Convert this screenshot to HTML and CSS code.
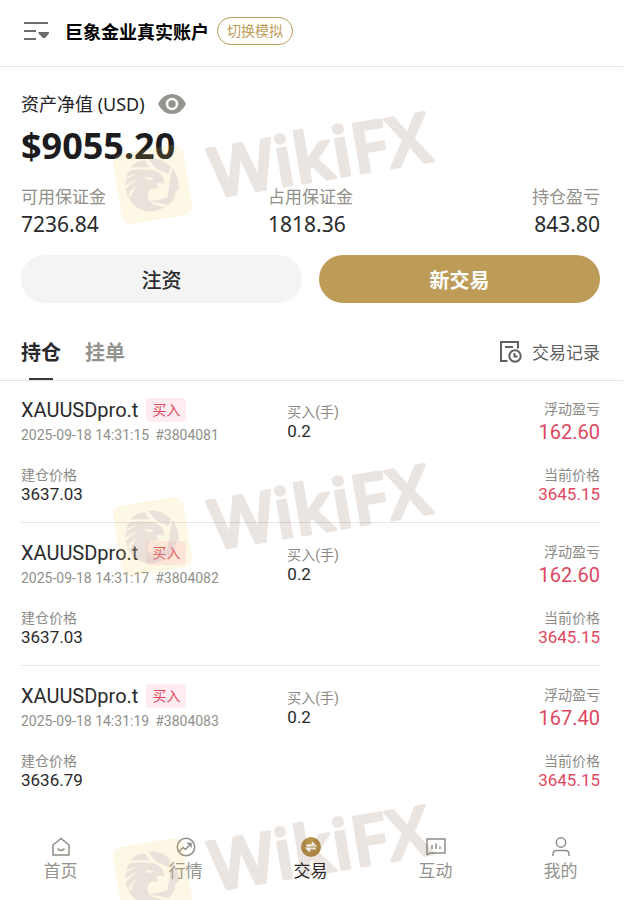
FILE: index.html
```html
<!DOCTYPE html>
<html lang="zh-CN">
<head>
<meta charset="utf-8">
<meta name="viewport" content="width=device-width, initial-scale=1">
<title>交易</title>
<link rel="stylesheet" href="styles.css">
</head>
<body>
<svg class="defs" aria-hidden="true">
  <symbol id="brand" viewBox="108 76 352 164" overflow="visible">
    <rect class="brand-tile" x="117" y="149" width="71" height="71" rx="9" transform="rotate(-9.6 152.5 184.5)"/>
    <g class="brand-mark" transform="translate(108 138) scale(.33333)">
      <path d="M66 88 Q80 73 103 67 Q111 66 116 74 L124 88 Q94 87 66 88Z"/>
      <path d="M119 62 Q160 57 188 86 L181 108 L145 92 Q132 79 119 62Z"/>
      <path d="M194 91 Q214 116 212 149 L184 188 L178 178 L189 108Z"/>
      <path d="M205 169 Q197 188 181 201 L122 189 Q154 187 179 178Z"/>
      <path d="M170 208 Q132 230 94 213 Q67 199 56 165 Q49 137 57 111 Q61 101 66 97 Q98 91 126 95 Q151 99 161 112 Q168 121 169 139 Q159 132 145 136 Q144 142 153 153 Q129 145 120 163 Q116 178 125 192 Q145 204 170 208Z"/>
    </g>
    <g class="brand-cut" transform="translate(108 138) scale(.33333)">
      <path d="M54 120 Q67 108 89 108 Q70 113 56 124Z"/>
      <path d="M51 145 Q67 129 85 126 Q66 137 54 154Z"/>
      <path d="M60 172 Q68 154 86 145 Q73 160 69 181Z"/>
      <path d="M109 118 L137 119 Q131 127 120 126Z"/>
    </g>
    <text class="brand-name" x="214" y="198" transform="rotate(-9.6 214 198)">WikiFX</text>
  </symbol>
</svg>

<div class="app">
  <header class="topbar">
    <button class="icon-button" aria-label="切换账户">
      <svg width="26" height="20" viewBox="0 0 26 20"><path d="M1 2H25M1 10H13M1 18H13" fill="none" stroke="#6d6d6d" stroke-width="2"/><path d="M16 11H25Q27 11 25.500 13L22.500 16.500Q21 18 19.500 16.500L16 13Q14.500 11 16 11Z" fill="#6d6d6d"/></svg>
    </button>
    <h1>巨象金业真实账户</h1>
    <button class="switch">切换模拟</button>
  </header>

  <main>
    <section class="account">
      <div class="equity-label">资产净值 (USD)
        <button class="icon-button" aria-label="隐藏金额">
          <svg width="30" height="20" viewBox="0 0 30 20"><path d="M1 10Q6 0 15 0T29 10Q24 20 15 20T1 10Z" fill="#94938d"/><circle cx="15" cy="10" r="5" fill="none" stroke="#fff" stroke-width="2.500"/></svg>
        </button>
      </div>
      <div class="equity">$9055.20</div>
      <dl class="summary">
        <div><dt>可用保证金</dt><dd>7236.84</dd></div>
        <div><dt>占用保证金</dt><dd>1818.36</dd></div>
        <div><dt>持仓盈亏</dt><dd>843.80</dd></div>
      </dl>
      <div class="actions">
        <button class="deposit">注资</button>
        <button class="trade">新交易</button>
      </div>
    </section>

    <div class="tabs">
      <button class="tab active">持仓</button>
      <button class="tab">挂单</button>
      <a class="history" href="#history">
        <svg width="22" height="22" viewBox="0 0 22 22" fill="none" stroke="#5f5f5f" stroke-width="2"><path d="M7.500 20H1V1H18V7.500M5 6H13"/><circle cx="15" cy="15" r="5.700"/><path d="M14.500 12V15.500H17.500"/></svg>
        交易记录
      </a>
    </div>

    <ul class="positions">
      <li>
        <div><div class="symbol">XAUUSDpro.t <span class="side">买入</span></div><div class="meta"><span>2025-09-18 14:31:15</span><span>#3804081</span></div></div>
        <div class="lots"><div class="label">买入(手)</div><div class="value">0.2</div></div>
        <div class="right"><div class="label">浮动盈亏</div><div class="profit">162.60</div></div>
        <div class="open"><div class="label">建仓价格</div><div class="value">3637.03</div></div>
        <div class="right now"><div class="label">当前价格</div><div class="value loss">3645.15</div></div>
      </li>
      <li>
        <div><div class="symbol">XAUUSDpro.t <span class="side">买入</span></div><div class="meta"><span>2025-09-18 14:31:17</span><span>#3804082</span></div></div>
        <div class="lots"><div class="label">买入(手)</div><div class="value">0.2</div></div>
        <div class="right"><div class="label">浮动盈亏</div><div class="profit">162.60</div></div>
        <div class="open"><div class="label">建仓价格</div><div class="value">3637.03</div></div>
        <div class="right now"><div class="label">当前价格</div><div class="value loss">3645.15</div></div>
      </li>
      <li>
        <div><div class="symbol">XAUUSDpro.t <span class="side">买入</span></div><div class="meta"><span>2025-09-18 14:31:19</span><span>#3804083</span></div></div>
        <div class="lots"><div class="label">买入(手)</div><div class="value">0.2</div></div>
        <div class="right"><div class="label">浮动盈亏</div><div class="profit">167.40</div></div>
        <div class="open"><div class="label">建仓价格</div><div class="value">3636.79</div></div>
        <div class="right now"><div class="label">当前价格</div><div class="value loss">3645.15</div></div>
      </li>
    </ul>
  </main>

  <nav class="bottom">
    <a href="#home"><svg width="20" height="20" viewBox="0 0 20 20"><path d="M2 8L10 1.500L18 8V18H2ZM6.500 11.500Q10 15.500 13.500 11.500"/></svg>首页</a>
    <a href="#market"><svg width="20" height="20" viewBox="0 0 20 20"><circle cx="10" cy="10" r="8.700"/><path d="M3 15L7 10.500L9.500 12.500L14.500 7M11 6.500H15V10.500"/></svg>行情</a>
    <a href="#trade" class="current"><svg width="20" height="20" viewBox="0 0 20 20"><circle class="coin" cx="10" cy="10" r="10"/><path class="swap" d="M5 8.500H14L11 5.500M15 11.500H6L9 14.500"/></svg>交易</a>
    <a href="#community"><svg width="20" height="20" viewBox="0 0 20 20"><path d="M1 18V2H19V16H4L1 18M6 8V12M10 6.500V12M14 9.500V12"/></svg>互动</a>
    <a href="#me"><svg width="20" height="20" viewBox="0 0 20 20"><circle cx="10" cy="5.500" r="4.700"/><path d="M2 19V17Q2 13.500 5.500 13.500H14.500Q18 13.500 18 17V19"/></svg>我的</a>
  </nav>

  <div class="watermarks" aria-hidden="true">
    <svg><use href="#brand"/></svg>
    <svg><use href="#brand"/></svg>
    <svg><use href="#brand"/></svg>
  </div>
</div>
</body>
</html>
```
FILE: styles.css
```css
* { box-sizing: border-box; margin: 0; padding: 0; }

body {
  background: #fff;
  color: #2a2a2c;
  font-family: Roboto, "Noto Sans CJK SC", sans-serif;
}

button { border: 0; background: none; font: inherit; color: inherit; }
a { color: inherit; text-decoration: none; }
ul { list-style: none; }
svg { display: block; flex: none; }

.defs { position: absolute; width: 0; height: 0; }

.app {
  position: relative;
  display: flex;
  flex-direction: column;
  min-height: 100vh;
  margin-right: 7px;
  overflow: hidden;
}

main { flex: 1; }

.topbar {
  display: flex;
  align-items: center;
  height: 67px;
  padding: 0 23px 4px;
  border-bottom: 1px solid #e6e6e6;
}
.topbar h1 {
  margin: 0 8px 0 16px;
  color: #000;
  font-size: 18px;
  font-weight: 700;
}
.switch {
  padding: 0 9px;
  border: 1px solid #bd9c58;
  border-radius: 14px;
  color: #bd9c58;
  font-size: 14px;
  line-height: 26px;
}

.account {
  padding: 24px 23px 0 21px;
  font-family: "Noto Sans", "Noto Sans CJK SC", sans-serif;
}
.equity-label {
  display: flex;
  align-items: center;
  gap: 12px;
  color: #222226;
  font-size: 18px;
  line-height: 26px;
}
.equity {
  color: #1c1c20;
  font-size: 36px;
  font-weight: 700;
  line-height: 58px;
}
.summary {
  display: grid;
  grid-template-columns: repeat(3, 1fr);
  padding-top: 10px;
}
.summary > div:nth-child(2) { justify-self: center; }
.summary > div:nth-child(3) { justify-self: end; text-align: right; }
.summary dt { color: #91908a; font-size: 17px; line-height: 24px; }
.summary dd { font-size: 21px; line-height: 30px; }

.actions {
  display: grid;
  grid-template-columns: 1fr 1fr;
  gap: 17px;
  padding-top: 16px;
}
.actions button {
  height: 48px;
  border-radius: 24px;
  font-size: 20px;
  font-weight: 700;
}
.deposit { background: #f4f4f4; }
.actions .deposit { font-weight: 500; }
.trade { background: #bd9c58; color: #fff; }

.tabs {
  display: flex;
  gap: 24px;
  height: 78px;
  padding: 20px 23px 0 21px;
  border-bottom: 1px solid #e3e3e3;
}
.tab {
  position: relative;
  color: #94938d;
  font-size: 20px;
  font-weight: 700;
}
.tab.active { color: #29292b; }
.tab.active::after {
  content: "";
  position: absolute;
  bottom: 0;
  left: 8px;
  right: 8px;
  height: 2px;
  background: #3a3a3e;
}
.history {
  display: flex;
  align-items: center;
  gap: 10px;
  margin-left: auto;
  color: #5f5f5f;
  font-size: 17px;
}

.positions { padding: 0 23px 0 21px; }
.positions li {
  display: grid;
  grid-template-columns: 46% 1fr auto;
  row-gap: 20px;
  padding: 18px 0;
  border-bottom: 1px solid #e6e6e6;
}
.positions li:first-child { padding-top: 17px; }
.positions li:last-child { border-bottom: 0; }
.symbol {
  display: flex;
  align-items: center;
  gap: 8px;
  font-size: 20px;
  line-height: 24px;
}
.side {
  padding: 0 6px;
  border-radius: 4px;
  background: #ffecf0;
  color: #df4860;
  font-size: 14px;
}
.meta {
  display: flex;
  gap: 6px;
  padding-top: 3px;
  color: #91908a;
  font-size: 14px;
  line-height: 20px;
}
.label { color: #8b8a85; font-size: 14px; line-height: 20px; }
.value { font-size: 17px; line-height: 19px; }
.profit { color: #df4860; font-size: 20px; line-height: 26px; }
.loss { color: #df4860; }
.lots { padding-top: 4px; }
.right { padding-top: 1px; text-align: right; }
.now { grid-column: 3; padding-top: 0; }

.bottom {
  display: grid;
  grid-template-columns: repeat(5, 1fr);
  margin-left: -2px;
  padding-bottom: 17px;
  color: #94938d;
  font-size: 17px;
  line-height: 24px;
}
.bottom a {
  display: flex;
  flex-direction: column;
  align-items: center;
  gap: 2px;
}
.bottom svg { fill: none; stroke: #8f8e88; stroke-width: 1.5; }
.bottom .current { color: #29292b; }
.bottom .coin { fill: #b8934b; stroke: none; }
.bottom .swap { stroke: #fff; stroke-width: 2; }

.watermarks {
  position: absolute;
  top: 76px;
  left: 108px;
  display: grid;
  grid-template-rows: 352px 341px 164px;
  pointer-events: none;
}
.watermarks svg { width: 352px; height: 164px; overflow: visible; }
.brand-tile { fill: #f4ca50; opacity: .15; }
.brand-mark { fill: #b4a0be; opacity: .24; }
.brand-cut { fill: #fdf6e4; }
.brand-name {
  font-family: "Open Sans", sans-serif;
  font-size: 69px;
  font-weight: 600;
  fill: #64321e;
  stroke: #64321e;
  stroke-width: 3;
  stroke-linejoin: round;
  opacity: .12;
}
```
